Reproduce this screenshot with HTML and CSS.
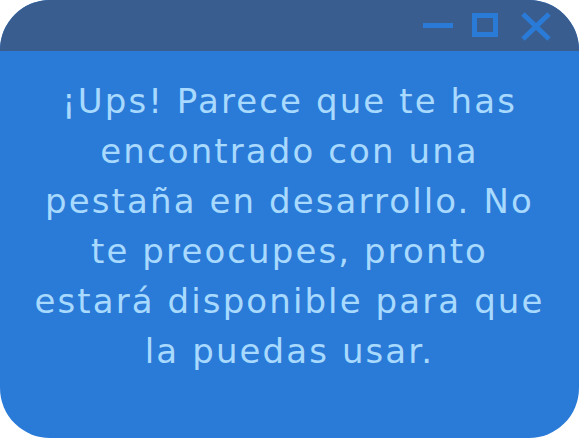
FILE: index.html
```html
<!DOCTYPE html>
<html lang="es">
<head>
<meta charset="utf-8">
<title>En desarrollo</title>
<link rel="stylesheet" href="styles.css">
</head>
<body>
<div class="window">
  <div class="titlebar">
    <div class="controls">
      <svg class="icon icon-min" width="30" height="29" viewBox="0 0 30 29" aria-label="Minimizar"><rect x="0" y="11" width="30" height="5" fill="currentColor"/></svg>
      <svg class="icon icon-max" width="26" height="29" viewBox="0 0 26 29" aria-label="Maximizar"><rect x="2.5" y="3.5" width="21" height="19" fill="none" stroke="currentColor" stroke-width="5"/></svg>
      <svg class="icon icon-close" width="30" height="29" viewBox="0 0 30 29" aria-label="Cerrar"><path d="M2 2 L28 27 M28 2 L2 27" stroke="currentColor" stroke-width="5" fill="none"/></svg>
    </div>
  </div>
  <div class="content">
    <p class="message">¡Ups! Parece que te has<br>encontrado con una<br>pestaña en desarrollo. No<br>te preocupes, pronto<br>estará disponible para que<br>la puedas usar.</p>
  </div>
</div>
</body>
</html>
```
FILE: styles.css
```css
html, body {
  margin: 0;
  padding: 0;
  background: #ffffff;
}

.window {
  width: 579px;
  height: 438px;
  border-radius: 50px;
  overflow: hidden;
  display: flex;
  flex-direction: column;
  background: #2a7bd7;
}

.titlebar {
  height: 51px;
  flex: 0 0 51px;
  background: #3a5d90;
  display: flex;
  justify-content: flex-end;
  align-items: flex-start;
  padding: 12px 28px 0 0;
  box-sizing: border-box;
}

.controls {
  display: flex;
  align-items: flex-start;
}

.icon {
  display: block;
  color: #2a7bd7;
}

.icon-max {
  margin-left: 19px;
}

.icon-close {
  margin-left: 23px;
}

.content {
  flex: 1;
  padding-top: 25px;
}

.message {
  margin: 0;
  font-family: "DejaVu Sans", sans-serif;
  font-size: 34px;
  line-height: 50px;
  letter-spacing: 2.1px;
  color: #a8d9ff;
  text-align: center;
}
```
